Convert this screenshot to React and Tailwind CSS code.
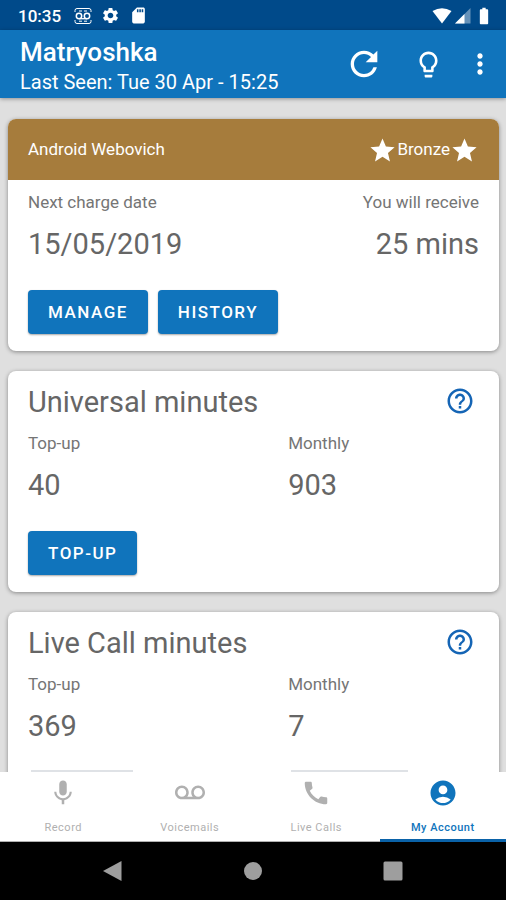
// App.jsx
// Account screen: plan summary, minute balances and the bottom tab bar
import React from "react";
import {
  MdAccountCircle,
  MdBatteryFull,
  MdCall,
  MdHelpOutline,
  MdLightbulbOutline,
  MdMic,
  MdMoreVert,
  MdRefresh,
  MdSdCard,
  MdSettings,
  MdStar,
  MdVoicemail,
} from "react-icons/md";

const TABS = [
  { label: "Record", Icon: MdMic },
  { label: "Voicemails", Icon: MdVoicemail },
  { label: "Live Calls", Icon: MdCall },
  { label: "My Account", Icon: MdAccountCircle, active: true },
];

function StatusBar() {
  return (
    <div className="flex h-[30px] shrink-0 items-center bg-[#004a8a] pt-px pr-3 pl-[18px] text-white">
      <span className="text-[17px] leading-5 font-medium">10:35</span>
      {/* Voicemail badge */}
      <svg className="ml-[13px] size-[18px]" viewBox="0 0 18 18" fill="none" stroke="currentColor">
        <path
          d="M1 5V3.500Q1 1.500 3 1.500H15Q17 1.500 17 3.500V5M1 13V14.500Q1 16.500 3 16.500H15Q17 16.500 17 14.500V13M5 4H8M10 4H13M5 14.200H8M10 14.200H13"
          strokeWidth="1"
        />
        <circle cx="5" cy="9" r="2.700" strokeWidth="1.500" />
        <circle cx="13" cy="9" r="2.700" strokeWidth="1.500" />
        <path d="M5 11.700H13" strokeWidth="1.300" />
      </svg>
      <MdSettings className="ml-[9px] size-[19px]" />
      <MdSdCard className="ml-[9px] size-[19px]" />
      {/* Wifi, signal, battery */}
      <svg className="ml-auto h-[16px] w-5" viewBox="0 0 20 16" fill="currentColor">
        <path d="M0.500 3Q10 -2.500 19.500 3L10 15.500Z" />
      </svg>
      <svg className="ml-[3px] size-4" viewBox="0 0 16 16" fill="currentColor">
        <path d="M15.500 0V15.500H0Z" opacity="0.400" />
        <path d="M9.500 6V15.500H0Z" />
      </svg>
      <MdBatteryFull className="ml-[3px] size-5" />
    </div>
  );
}

function AppBar() {
  return (
    <header className="z-10 flex h-[68px] shrink-0 items-center bg-[#1074bc] pr-[10px] pl-5 text-white shadow-[0_1px_4px_rgba(0,0,0,0.35)]">
      <div className="flex-1 pt-1">
        <h1 className="text-[26px] leading-8 font-medium">Matryoshka</h1>
        <p className="text-[20px] leading-7">Last Seen: Tue 30 Apr - 15:25</p>
      </div>
      <button aria-label="Refresh" className="flex size-10 items-center justify-center">
        <MdRefresh className="size-10" />
      </button>
      <button aria-label="Tips" className="ml-7 flex size-8 items-center justify-center">
        <MdLightbulbOutline className="size-[31px]" />
      </button>
      <button aria-label="More options" className="ml-5 flex size-8 items-center justify-center">
        <MdMoreVert className="size-8" />
      </button>
    </header>
  );
}

function Card({ children }) {
  return (
    <section className="shrink-0 overflow-hidden rounded-lg bg-white text-[#666] shadow-[0_1px_4px_rgba(0,0,0,0.4)]">
      {children}
    </section>
  );
}

function Stat({ label, value }) {
  return (
    <div>
      <p className="text-[17px] leading-5 text-[#757575]">{label}</p>
      <p className="mt-4 text-[29px] leading-8">{value}</p>
    </div>
  );
}

function Button({ children }) {
  return (
    <button className="h-11 rounded bg-[#1074bc] px-5 pt-px text-[17px] font-medium tracking-[1.5px] text-white shadow-[0_1px_2px_rgba(0,0,0,0.35)]">
      {children}
    </button>
  );
}

function PlanCard() {
  return (
    <Card>
      <div className="flex h-[61px] items-center justify-between bg-[#a67c3c] px-5 pt-px text-[17px] text-white">
        <span>Android Webovich</span>
        <span className="flex items-center">
          <MdStar className="size-[29px]" />
          Bronze
          <MdStar className="size-[29px]" />
        </span>
      </div>
      <div className="px-5 pt-3 pb-[17px]">
        <div className="flex justify-between">
          <Stat label="Next charge date" value="15/05/2019" />
          <div className="text-right">
            <Stat label="You will receive" value="25 mins" />
          </div>
        </div>
        <div className="mt-[30px] flex gap-[10px]">
          <Button>MANAGE</Button>
          <Button>HISTORY</Button>
        </div>
      </div>
    </Card>
  );
}

function BalanceCard({ title, topUp, monthly, children }) {
  return (
    <Card>
      <div className="px-5 pt-[11px] pb-[17px]">
        <div className="flex items-start justify-between">
          <h2 className="text-[29px] leading-10">{title}</h2>
          <button aria-label={`About ${title}`} className="mt-1 mr-1">
            <MdHelpOutline className="size-[30px] text-[#1565b5]" />
          </button>
        </div>
        <div className="mt-[11px] grid grid-cols-[15fr_11fr]">
          <Stat label="Top-up" value={topUp} />
          <Stat label="Monthly" value={monthly} />
        </div>
        {children}
      </div>
    </Card>
  );
}

function TabBar() {
  return (
    <nav className="z-10 grid h-[70px] shrink-0 grid-cols-4 bg-white">
      {TABS.map(({ label, Icon, active }) => (
        <button
          key={label}
          className={`flex flex-col items-center pt-[6px] ${
            active
              ? "border-b-[3px] border-[#0a62a8] font-medium text-[#1074bc]"
              : "border-b border-[#b0b0b0] text-[#b0b0b0]"
          }`}
        >
          <Icon className="size-[30px]" />
          <span className="mt-3 text-[11px] leading-4 tracking-[0.5px]">{label}</span>
        </button>
      ))}
    </nav>
  );
}

function SystemNav() {
  return (
    <div className="flex h-[58px] shrink-0 items-center justify-center gap-[120px] bg-black text-[#9e9e9e]">
      <button aria-label="Back">
        <svg className="size-5" viewBox="0 0 20 20" fill="currentColor">
          <path d="M0 10L18.500 0V20Z" />
        </svg>
      </button>
      <button aria-label="Home">
        <svg className="size-5" viewBox="0 0 20 20" fill="currentColor">
          <circle cx="10" cy="10" r="9" />
        </svg>
      </button>
      <button aria-label="Recent apps">
        <svg className="size-5" viewBox="0 0 20 20" fill="currentColor">
          <rect x="0.500" y="0.500" width="19" height="19" rx="1.500" />
        </svg>
      </button>
    </div>
  );
}

export default function App() {
  return (
    <div className="flex h-screen flex-col overflow-hidden bg-[#dfdfdf] font-[Roboto,sans-serif]">
      <StatusBar />
      <AppBar />
      <main className="flex min-h-0 flex-1 flex-col gap-5 overflow-hidden pt-[21px] pr-[7px] pl-2">
        <PlanCard />
        <BalanceCard title="Universal minutes" topUp={40} monthly={903}>
          <div className="mt-[30px]">
            <Button>TOP-UP</Button>
          </div>
        </BalanceCard>
        <BalanceCard title="Live Call minutes" topUp={369} monthly={7}>
          {/* Top edges of the actions under the tab bar */}
          <div className="mt-7 grid grid-cols-[15fr_11fr]">
            <div className="mx-[3px] h-[3px] w-[102px] bg-[#dfe2e6]" />
            <div className="mx-[3px] h-[3px] w-[117px] bg-[#dfe2e6]" />
          </div>
        </BalanceCard>
      </main>
      <TabBar />
      <SystemNav />
    </div>
  );
}
